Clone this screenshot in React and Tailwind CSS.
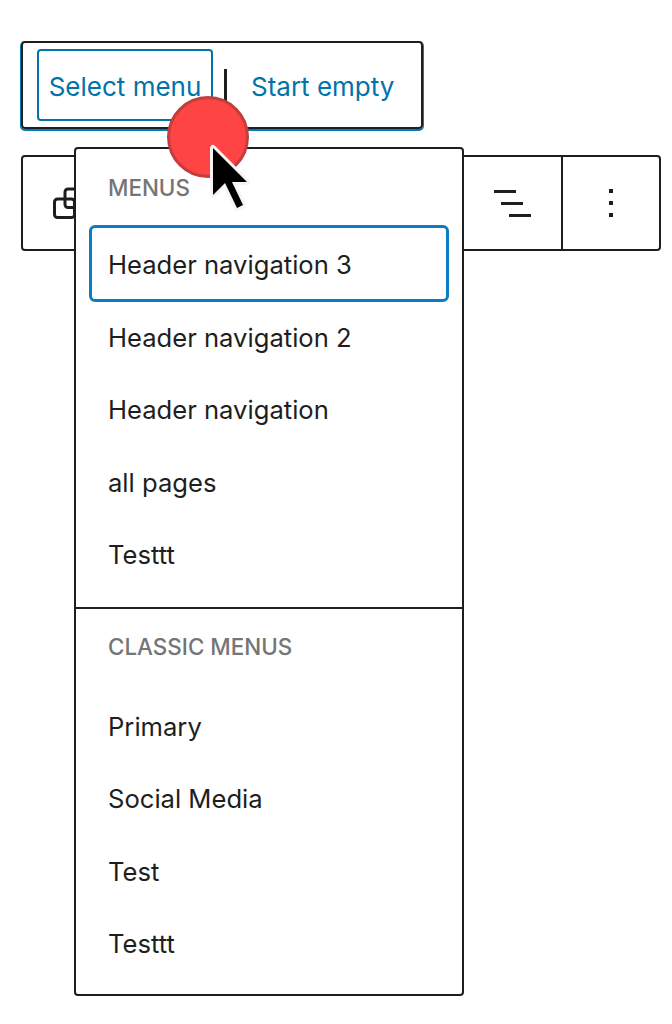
const primaryMenus = ["Header navigation 2", "Header navigation", "all pages", "Testtt"];
const classicMenus = ["Primary", "Social Media", "Test", "Testtt"];

const MenuItem = ({ label }) => (
  <div className="h-[72.5px] flex items-center pl-[32px] text-[25.6px] text-[#1e1e1e]">{label}</div>
);

const GroupLabel = ({ children }) => (
  <div className="h-[24px] flex items-center pl-[32px] text-[22.4px] font-medium text-[#757575]">{children}</div>
);

const Cursor = () => (
  <svg className="absolute left-[165px] top-[94px]" width="100" height="125" viewBox="165 94 100 125">
    <circle cx="208" cy="137" r="39.5" fill="#ff4444" stroke="#c23d3d" strokeWidth="3" />
    <path
      d="M213 148 L213 195 L225 183 L237 208 L243 205 L232 182 L247 182 Z"
      fill="#000"
      stroke="#f5f5f5"
      strokeWidth="6"
      strokeLinejoin="round"
      paintOrder="stroke"
    />
  </svg>
);

export default function App() {
  return (
    <div className="relative h-[1024px] w-[672px] overflow-hidden bg-white pt-[41px] pl-[21px] font-['Inter',sans-serif]">
      <div className="flex h-[88px] w-[402px] items-center rounded-[4px] border-2 border-[#1e1e1e] pl-[14px] shadow-[0_1px_0_1px_#007cba] text-[26px] text-[#0073aa]">
        <div className="flex h-[72px] w-[176px] items-center justify-center rounded-[4px] border-2 border-[#0073aa] pt-[2px]">
          Select menu
        </div>
        <div className="ml-[11px] mt-[26px] h-[44px] w-[3px] self-start bg-[#1e1e1e]"></div>
        <div className="ml-[24px] pt-[2px]">Start empty</div>
      </div>

      <div className="mt-[26px] flex h-[96px] w-[640px] rounded-[4px] border-2 border-[#1e1e1e]">
        <div className="flex flex-1 items-center pl-[30px]">
          <svg width="34" height="32" viewBox="0 0 34 32" fill="none" stroke="#1e1e1e" strokeWidth="3">
            <rect x="1.5" y="12" width="20" height="18.5" rx="3" />
            <rect x="12" y="2" width="20" height="18.5" rx="3" />
          </svg>
        </div>
        <div className="relative flex w-[98px] items-center justify-center border-l-2 border-[#1e1e1e]">
          <svg className="absolute left-[-71px]" width="40" height="30" viewBox="0 0 40 30" fill="#1e1e1e">
            <rect x="2" y="2" width="22" height="3" />
            <rect x="9" y="14" width="22" height="3" />
            <rect x="17" y="26" width="22" height="3" />
          </svg>
          <svg width="4" height="28" viewBox="0 0 4 28" fill="#1e1e1e">
            <rect width="4" height="4" />
            <rect y="12" width="4" height="4" />
            <rect y="24" width="4" height="4" />
          </svg>
        </div>
      </div>

      <div className="absolute left-[74px] top-[147px] h-[849px] w-[390px] rounded-[4px] border-2 border-[#1e1e1e] bg-white">
        <div className="pt-[27px]">
          <GroupLabel>MENUS</GroupLabel>
        </div>
        <div className="mx-[13px] mt-[25px] flex h-[77px] items-center rounded-[6px] border-[3px] border-[#0a7cc1] pl-[16px] pt-[3px] text-[25.6px] text-[#1e1e1e]">
          Header navigation 3
        </div>
        <div className="-mt-[0.4px]">
          {primaryMenus.map((label) => (
            <MenuItem key={label} label={label} />
          ))}
        </div>
        <div className="mt-[15.4px] h-[2px] bg-[#1e1e1e]"></div>
        <div className="pt-[26px] pb-[31.6px]">
          <GroupLabel>CLASSIC MENUS</GroupLabel>
        </div>
        {classicMenus.map((label) => (
          <MenuItem key={label} label={label} />
        ))}
      </div>

      <Cursor />
    </div>
  );
}
